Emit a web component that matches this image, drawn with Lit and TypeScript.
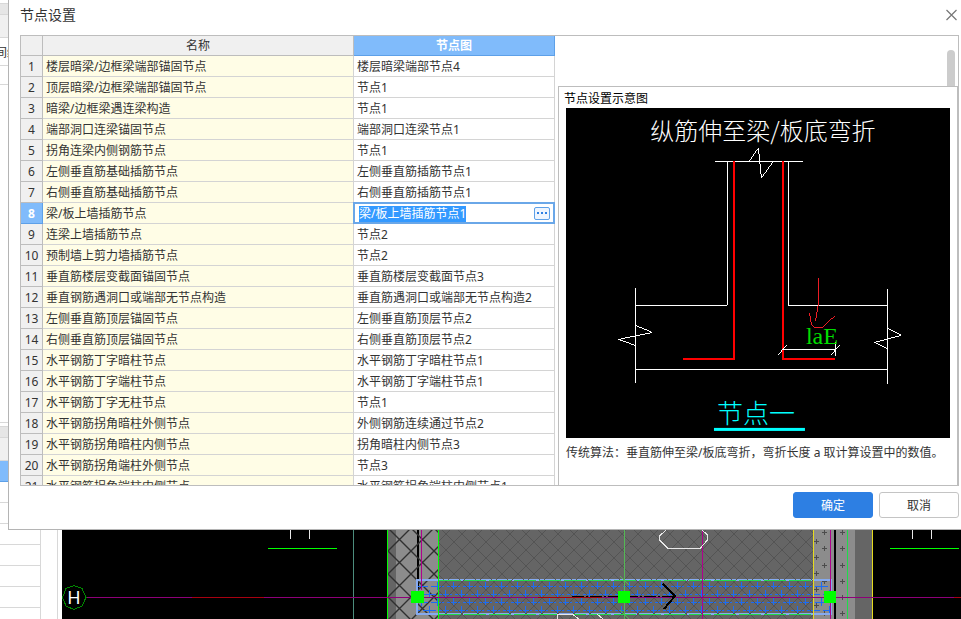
import { LitElement, html, css, svg } from "lit";
import { customElement, state, query } from "lit/decorators.js";
import { classMap } from "lit/directives/class-map.js";

interface NodeRow {
  name: string;
  node: string;
}

const ROWS: NodeRow[] = [
  { name: "楼层暗梁/边框梁端部锚固节点", node: "楼层暗梁端部节点4" },
  { name: "顶层暗梁/边框梁端部锚固节点", node: "节点1" },
  { name: "暗梁/边框梁遇连梁构造", node: "节点1" },
  { name: "端部洞口连梁锚固节点", node: "端部洞口连梁节点1" },
  { name: "拐角连梁内侧钢筋节点", node: "节点1" },
  { name: "左侧垂直筋基础插筋节点", node: "左侧垂直筋插筋节点1" },
  { name: "右侧垂直筋基础插筋节点", node: "右侧垂直筋插筋节点1" },
  { name: "梁/板上墙插筋节点", node: "梁/板上墙插筋节点1" },
  { name: "连梁上墙插筋节点", node: "节点2" },
  { name: "预制墙上剪力墙插筋节点", node: "节点2" },
  { name: "垂直筋楼层变截面锚固节点", node: "垂直筋楼层变截面节点3" },
  { name: "垂直钢筋遇洞口或端部无节点构造", node: "垂直筋遇洞口或端部无节点构造2" },
  { name: "左侧垂直筋顶层锚固节点", node: "左侧垂直筋顶层节点2" },
  { name: "右侧垂直筋顶层锚固节点", node: "右侧垂直筋顶层节点2" },
  { name: "水平钢筋丁字暗柱节点", node: "水平钢筋丁字暗柱节点1" },
  { name: "水平钢筋丁字端柱节点", node: "水平钢筋丁字端柱节点1" },
  { name: "水平钢筋丁字无柱节点", node: "节点1" },
  { name: "水平钢筋拐角暗柱外侧节点", node: "外侧钢筋连续通过节点2" },
  { name: "水平钢筋拐角暗柱内侧节点", node: "拐角暗柱内侧节点3" },
  { name: "水平钢筋拐角端柱外侧节点", node: "节点3" },
  { name: "水平钢筋拐角端柱内侧节点", node: "水平钢筋拐角端柱内侧节点1" },
];

/* Section drawing of the selected joint. */
@customElement("node-diagram")
export class NodeDiagram extends LitElement {
  static styles = css`
    :host { display: block; background: #000; }
    svg { display: block; width: 100%; height: auto; }
    .white { fill: none; stroke: #fff; stroke-width: 1; shape-rendering: crispEdges; }
    .bar { fill: none; stroke: #f00; stroke-width: 2; shape-rendering: crispEdges; }
    .mark { fill: none; stroke: #ed1c24; stroke-width: 1; shape-rendering: crispEdges; }
    .under { fill: #0ff; }
    text { font-family: "Noto Sans CJK SC", sans-serif; font-weight: 300; }
    .title { font-size: 24px; fill: #fff; }
    .dim { font-family: "Liberation Serif", serif; font-size: 24px; fill: #0d0; }
    .caption { font-size: 26px; fill: #0ff; }
  `;

  render() {
    return html`
      <svg viewBox="566 108 384 330" role="img" aria-label="节点一">
        <text class="title" x="763" y="140" text-anchor="middle">纵筋伸至梁/板底弯折</text>
        <path class="white" d="M715 161.5H803M749 161.5L758.5 148L761.5 178L773 162" />
        <path class="white" d="M727.5 161V305.5H635M788.5 161V305.5H887M635.5 288V383M887.5 289V384M635 369.5H887" />
        <path class="white" d="M635.5 325.5L652.5 332.5L618.5 339.5L635.5 345.5M887.5 328.5L901.5 335.5L874.5 342.5L887.5 348.5" />
        <path class="bar" d="M734 161V359H683M783 161V359H835" />
        <path class="white" d="M783 349.5H835M778 355L787 345M831 355L840 345M835.5 342V356" />
        <path class="mark" d="M818.5 278V304L815.5 321M809.5 313L811.5 325L814.5 327.5H823L830 320L835 316.5" />
        <text class="dim" x="806" y="344">laE</text>
        <text class="caption" x="756" y="423" text-anchor="middle">节点一</text>
        <rect class="under" x="714" y="428" width="91" height="3" />
      </svg>
    `;
  }
}

/* Plan view behind the dialog. */
@customElement("plan-canvas")
export class PlanCanvas extends LitElement {
  static styles = css`
    :host { display: flex; flex-direction: column; justify-content: flex-end; background: #000; }
    svg { display: block; width: 100%; height: auto; shape-rendering: crispEdges; }
    .line { fill: none; stroke-width: 1; }
    .hatch { fill: none; shape-rendering: geometricPrecision; }
    .magenta { stroke: #b0008c; }
    .axis { stroke: #8e0078; }
    .red { stroke: #a80010; }
    .green { stroke: #0f0; }
    .soft { stroke: #1fdc4a; }
    .yellow { stroke: #e6dc1e; }
    .pale { stroke: #e8e8e8; }
    .teal { stroke: #4c8c7c; }
    .ink { stroke: #000; stroke-width: 2; }
    .ring { stroke: #008a00; }
    .grip { fill: #0f0; }
    .letter { font: 18px "Noto Sans", sans-serif; fill: #fff; }
  `;

  private cross(x: number, y: number) {
    return svg`<path class="line" stroke="#4c4c4c" d="M${x - 2} ${y + 0.5}h5M${x + 0.5} ${y - 2}v5" />`;
  }

  render() {
    const even = [532, 548, 565, 581, 597, 613];
    const odd = [541, 557, 573, 589, 605];
    return html`
      <svg viewBox="62 529 899 90" aria-hidden="true">
        <defs>
          <pattern id="slab" width="16" height="16" x="446" y="534" patternUnits="userSpaceOnUse">
            <path class="hatch" d="M-1 -1L17 17M17 -1L-1 17" stroke="#545454" stroke-width="1" />
          </pattern>
          <pattern id="wall" width="23" height="23" x="388" y="528" patternUnits="userSpaceOnUse">
            <path class="hatch" d="M-1 -1L24 24M24 -1L-1 24" stroke="#303030" stroke-width="1.4" />
          </pattern>
          <pattern id="steel" width="16" height="16" x="441" y="582" patternUnits="userSpaceOnUse">
            <path d="M0 12.5H11M14 12.5H16M4.5 8V16M6 4.5H16M0 4.5H3M12.5 0V8" fill="none" stroke="#1c6cf5" stroke-width="1" />
          </pattern>
        </defs>

        <path class="line teal" d="M353.5 529V619" />
        <rect x="387" y="529" width="485" height="90" fill="#656565" />
        <rect x="396" y="529" width="42" height="90" fill="#8c8c8c" />
        <rect x="814" y="529" width="41" height="90" fill="#8c8c8c" />
        <path class="line ink" d="M418 529V590M835 529V619" />
        <rect x="388" y="529" width="50" height="90" fill="url(#wall)" />
        ${even.map((y) => [this.cross(842, y), this.cross(824, y)])}
        ${odd.map((y) => this.cross(816, y))}

        <rect x="418" y="582" width="412" height="31" fill="url(#steel)" />
        <path d="M417 580H831V614H417Z" fill="none" stroke="#86aaf0" stroke-width="2" />
        <rect x="439" y="529" width="374" height="90" fill="url(#slab)" />
        <path class="line soft" d="M439 580.5H813M439 614.5H813" stroke-dasharray="22 3" />
        <path class="line green" d="M387.5 529V619M438.5 529V619" />
        <path class="line soft" d="M847.5 529V619" />
        <path class="line" stroke="#54b854" d="M624.5 529V619M620 576L629 585M620 610L629 619" />
        <path class="line magenta" d="M421.5 529V590M702.5 529V619M830.5 529V619" />
        <path class="line yellow" d="M813.5 529V619M872.5 529V619" />

        <path class="line axis" d="M86 597.5H961" />
        <path class="line red" d="M192 597.5H264M538 597.5H602M954 597.5H961" />
        <path class="line" stroke="#000" stroke-dasharray="12 2 2 2" d="M572 596.5H675" />
        <path class="line ink" d="M663 584L675 596L664 609" />
        <path class="line pale" d="M667 529L659.5 536V540L668 548.5H700L707.5 540V535L701 529" />
        <path class="line pale" d="M557.5 619V614.5H573L579 619M597 614L603 619" />

        <path class="line pale" d="M290.5 529V539M309.5 529V539M912.5 529V539M931.5 529V539" />
        <path class="line green" d="M268 548.5H337M890 548.5H959" />

        <path class="line ring" d="M74 585.5L82 588.5L86 597.5L82 606L74 609.5L66 606L62.5 597.5L66 588.5Z" />
        <text class="letter" x="74" y="604" text-anchor="middle">H</text>

        <rect class="grip" x="411" y="591" width="13" height="12" />
        <rect class="grip" x="618" y="591" width="12" height="12" />
        <rect class="grip" x="824" y="591" width="12" height="12" />
      </svg>
    `;
  }
}

@customElement("app-root")
export class AppRoot extends LitElement {
  static styles = css`
    :host {
      position: relative;
      display: flex;
      min-height: 100vh;
      overflow: hidden;
      background: #fff;
      color: #333;
      font: 12px/20px "Noto Sans", "Noto Sans CJK SC", sans-serif;
    }
    * { box-sizing: border-box; }

    .side { flex: none; width: 41px; display: flex; flex-direction: column; overflow: hidden; border-right: 1px solid #d8d8d8; }
    .line { flex: none; height: 21px; border-bottom: 1px solid #d8d8d8; white-space: nowrap; }
    .thin { height: 4px; }
    .band { height: 11px; background: #e6e6e6; }
    .head { height: 23px; background: #f0f0f0; }
    .entry { height: 28px; line-height: 30px; text-indent: -5px; }
    .short { height: 19px; }
    .tall { height: 338px; }
    .picked { background: #80bbfb; border-color: #5da0e8; }
    .splitter { flex: none; width: 21px; border-right: 4px solid #fff; }
    .splitter::after { content: ""; display: block; height: 100%; border-right: 1px solid #d8d8d8; }
    .plan { flex: 1; min-width: 0; }

    .dialog {
      position: absolute;
      top: 0;
      left: 8px;
      right: 0;
      display: flex;
      flex-direction: column;
      padding: 0 2px 11px 11px;
      background: #fff;
      border: solid #b4b4b4;
      border-width: 0 0 1px 1px;
    }
    .bar { display: flex; align-items: center; justify-content: space-between; height: 35px; padding-bottom: 5px; }
    .bar h1 { margin: 0; font-size: 14px; font-weight: 400; line-height: 20px; }
    .close { display: flex; padding: 0; border: 0; background: none; }
    .close svg { width: 14px; height: 13px; fill: none; stroke: #777; stroke-width: 1.2; }

    .frame {
      display: grid;
      grid-template-columns: minmax(0, 57fr) minmax(0, 43fr);
      height: 451px;
      overflow: hidden;
      border: 1px solid #bdbdbd;
    }
    .list { min-height: 0; overflow: hidden; }
    table { width: 100%; table-layout: fixed; border-spacing: 0; }
    .c-no { width: 22px; }
    .c-node { width: 201px; }
    th, td {
      height: 21px;
      padding: 2px 3px 0;
      border: solid #d4d4d4;
      border-width: 0 1px 1px 0;
      line-height: 18px;
      font-weight: 400;
      text-align: left;
      white-space: nowrap;
    }
    thead th { height: 20px; padding: 1px 0 0; background: #f0f0f0; border-color: #bdbdbd; text-align: center; }
    tbody th { padding: 2px 0 0; background: #f0f0f0; border-color: #bdbdbd; text-align: center; }
    .name { background: #fffde6; }
    thead .active, tbody .active { background: #80bbfb; border-color: #5da0e8; color: #fff; font-weight: 700; }
    .editing { padding: 0; }
    .editor {
      display: flex;
      align-items: center;
      justify-content: space-between;
      height: 20px;
      padding: 1px 4px 0 5px;
      background: #fff;
      box-shadow: 0 0 0 1px #6aa7e8, inset 0 0 0 1px #6aa7e8;
      position: relative;
    }
    .editor input { width: 150px; height: 16px; padding: 0; border: 0; outline: 0; background: none; color: #333; font: inherit; line-height: 16px; }
    .editor input::selection { background: #39f; color: #fff; }
    .more { display: flex; padding: 0; border: 0; background: none; }
    .more svg { width: 16px; height: 13px; }

    .detail { display: flex; flex-direction: column; min-height: 0; padding-left: 3px; }
    .track { flex: none; display: flex; justify-content: flex-end; height: 50px; padding: 14px 3px 0 0; }
    .thumb { width: 8px; border-radius: 4px 4px 0 0; background: #ccc; }
    .card { flex: 1; padding: 3px 7px 0; border: solid #bdbdbd; border-width: 1px 1px 0 1px; }
    .card h2 { margin: 0; font-size: 12px; line-height: 18px; font-weight: 400; color: #000; text-indent: -2px; }
    .card p { margin: 0; padding-top: 5px; white-space: nowrap; }

    .actions { display: flex; justify-content: flex-end; gap: 6px; padding-top: 6px; }
    .action { width: 80px; height: 26px; padding: 2px 0 0; border: 1px solid #c4c4c4; border-radius: 3px; background: #fff; color: #333; font: inherit; }
    .primary { border-color: #2d7fe3; background: #2d7fe3; color: #fff; }
  `;

  @state() private selected = 7;
  @query(".editor input") private field?: HTMLInputElement;

  firstUpdated() {
    this.field?.focus();
    this.field?.select();
  }

  private renderNode(row: NodeRow, active: boolean, index: number) {
    if (!active) {
      return html`<td @click=${() => (this.selected = index)}>${row.node}</td>`;
    }
    return html`
      <td class="editing">
        <div class="editor">
          <input type="text" aria-label=${row.name} .value=${row.node} />
          <button class="more" type="button" aria-label="选择节点图">
            <svg viewBox="0 0 16 13">
              <rect x=".5" y=".5" width="15" height="12" rx="1.5" fill="#eef5fe" stroke="#5da0e8" />
              <path d="M3 5h2v2H3zM7 5h2v2H7zM11 5h2v2h-2z" fill="#2d7fe3" />
            </svg>
          </button>
        </div>
      </td>
    `;
  }

  private renderSide() {
    const kinds = ["thin", "band", "head", "entry", "short", "tall", "thin", "band", "head", "picked", "", "", "", "", "", ""];
    return html`
      <div class="side">
        ${kinds.map((kind) => html`<div class="line ${kind}">${kind === "entry" ? "间缝" : ""}</div>`)}
      </div>
    `;
  }

  render() {
    return html`
      ${this.renderSide()}
      <div class="splitter"></div>
      <plan-canvas class="plan"></plan-canvas>

      <section class="dialog" role="dialog" aria-labelledby="title">
        <header class="bar">
          <h1 id="title">节点设置</h1>
          <button class="close" type="button" aria-label="关闭">
            <svg viewBox="0 0 14 13"><path d="M1.5 1L11.5 11M11.5 1L1.5 11" /></svg>
          </button>
        </header>

        <div class="frame">
          <div class="list">
            <table>
              <colgroup><col class="c-no" /><col /><col class="c-node" /></colgroup>
              <thead>
                <tr><th></th><th scope="col">名称</th><th scope="col" class="active">节点图</th></tr>
              </thead>
              <tbody>
                ${ROWS.map((row, i) => {
                  const active = i === this.selected;
                  return html`
                    <tr>
                      <th scope="row" class=${classMap({ active })}>${i + 1}</th>
                      <td class="name">${row.name}</td>
                      ${this.renderNode(row, active, i)}
                    </tr>
                  `;
                })}
              </tbody>
            </table>
          </div>
          <div class="detail">
            <div class="track"><div class="thumb"></div></div>
            <article class="card">
              <h2>节点设置示意图</h2>
              <node-diagram></node-diagram>
              <p>传统算法：垂直筋伸至梁/板底弯折，弯折长度 a 取计算设置中的数值。</p>
            </article>
          </div>
        </div>

        <footer class="actions">
          <button class="action primary" type="button">确定</button>
          <button class="action" type="button">取消</button>
        </footer>
      </section>
    `;
  }
}
